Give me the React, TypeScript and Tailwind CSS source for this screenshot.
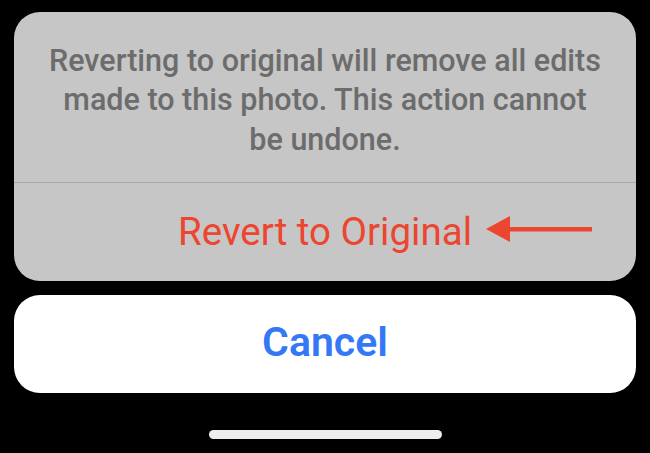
export default function App() {
  return (
    <div className="w-[650px] h-[453px] bg-black flex flex-col px-[14px] pt-[12px] font-['Roboto',sans-serif] overflow-hidden">
      <div className="rounded-[26px] bg-[#c6c6c6] flex flex-col">
        <div className="h-[170px] flex items-center justify-center text-center text-[30.5px] leading-[39.5px] text-[#6c6c6c] font-medium pt-[6px]">
          <p>
            Reverting to original will remove all edits
            <br />
            made to this photo. This action cannot
            <br />
            be undone.
          </p>
        </div>
        <div className="h-px bg-[#a8a8a8]" />
        <div className="relative h-[98px] flex items-center justify-center">
          <span className="text-[38.5px] text-[#ec4530]">Revert to Original</span>
          <svg className="absolute left-[472px] top-[33px]" width="106" height="26" viewBox="0 0 106 26">
            <polygon points="0,13 24,0 24,26" fill="#ec4530" />
            <rect x="20" y="11" width="86" height="4.5" fill="#ec4530" />
          </svg>
        </div>
      </div>
      <div className="mt-[14px] h-[98px] rounded-[26px] bg-white flex items-center justify-center">
        <span className="text-[41px] font-semibold text-[#3478f6] pb-[2px]">Cancel</span>
      </div>
      <div className="mt-[37px] flex justify-center">
        <div className="w-[233px] h-[9px] rounded-full bg-[#eeeeee]" />
      </div>
    </div>
  );
}
